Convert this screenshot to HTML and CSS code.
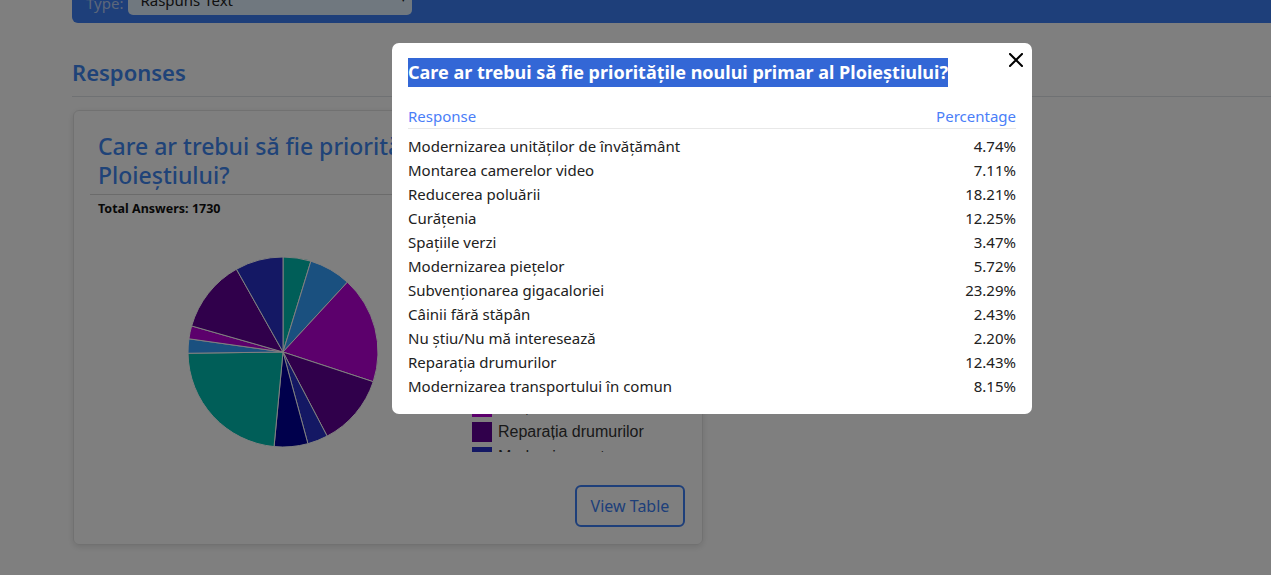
FILE: index.html
```html
<!DOCTYPE html>
<html lang="ro">
<head>
  <meta charset="UTF-8">
  <meta name="viewport" content="width=device-width, initial-scale=1.0">
  <title>Rezultate sondaj</title>
  <link rel="stylesheet" href="styles.css">
</head>
<body>
  <div class="page">
    <div class="filter-bar">
      <label class="filter-label">Type:</label>
      <div class="select">Raspuns Text<span class="caret">&#9662;</span></div>
    </div>

    <h2 class="section-title">Responses</h2>

    <div class="card">
      <h4 class="card-title">Care ar trebui să fie prioritățile noului primar al Ploieștiului?</h4>
      <div class="total">Total Answers: 1730</div>

      <div class="chart">
        <svg class="pie" width="190" height="190" viewBox="0 0 190 190">
          <g stroke="#fff" stroke-width="1" stroke-linejoin="round">
            <path fill="#00bdb0" d="M95 95 L95 0 A95 95 0 0 1 122.87 4.18 Z"/>
            <path fill="#35a0ff" d="M95 95 L122.87 4.18 A95 95 0 0 1 159.38 25.15 Z"/>
            <path fill="#b800d8" d="M95 95 L159.38 25.15 A95 95 0 0 1 185.24 124.7 Z"/>
            <path fill="#600096" d="M95 95 L185.24 124.7 A95 95 0 0 1 139.14 179.12 Z"/>
            <path fill="#2830c8" d="M95 95 L139.14 179.12 A95 95 0 0 1 119.9 186.68 Z"/>
            <path fill="#000098" d="M95 95 L119.9 186.68 A95 95 0 0 1 86.06 189.58 Z"/>
            <path fill="#00bdb0" d="M95 95 L86.06 189.58 A95 95 0 0 1 0.01 96.25 Z"/>
            <path fill="#35a0ff" d="M95 95 L0.01 96.25 A95 95 0 0 1 0.92 81.79 Z"/>
            <path fill="#b800d8" d="M95 95 L0.92 81.79 A95 95 0 0 1 3.64 68.96 Z"/>
            <path fill="#600096" d="M95 95 L3.64 68.96 A95 95 0 0 1 48.45 12.19 Z"/>
            <path fill="#2830c8" d="M95 95 L48.45 12.19 A95 95 0 0 1 95 0 Z"/>
          </g>
        </svg>

        <div class="legend">
          <ul class="legend-list">
            <li><span class="swatch sw-teal"></span>Modernizarea unităților de învățământ</li>
            <li><span class="swatch sw-blue"></span>Montarea camerelor video</li>
            <li><span class="swatch sw-purple"></span>Reducerea poluării</li>
            <li><span class="swatch sw-plum"></span>Curățenia</li>
            <li><span class="swatch sw-navy"></span>Spațiile verzi</li>
            <li><span class="swatch sw-ink"></span>Modernizarea piețelor</li>
            <li><span class="swatch sw-teal"></span>Subvenționarea gigacaloriei</li>
            <li><span class="swatch sw-blue"></span>Câinii fără stăpân</li>
            <li><span class="swatch sw-purple"></span>Nu știu/Nu mă interesează</li>
            <li><span class="swatch sw-plum"></span>Reparația drumurilor</li>
            <li><span class="swatch sw-navy"></span>Modernizarea transportului în comun</li>
          </ul>
        </div>
      </div>

      <div class="card-footer">
        <button class="btn-outline">View Table</button>
      </div>
    </div>
  </div>

  <div class="backdrop">
    <div class="modal">
      <button class="close" aria-label="Close">
        <svg width="14" height="14" viewBox="0 0 14 14"><path d="M1 1 L13 13 M13 1 L1 13" stroke="#000" stroke-width="2" stroke-linecap="square"/></svg>
      </button>
      <h3 class="modal-title"><span class="sel">Care ar trebui să fie prioritățile noului primar al Ploieștiului?</span></h3>
      <table class="resp-table">
        <thead>
          <tr><th>Response</th><th class="num">Percentage</th></tr>
        </thead>
        <tbody>
          <tr><td>Modernizarea unităților de învățământ</td><td class="num">4.74%</td></tr>
          <tr><td>Montarea camerelor video</td><td class="num">7.11%</td></tr>
          <tr><td>Reducerea poluării</td><td class="num">18.21%</td></tr>
          <tr><td>Curățenia</td><td class="num">12.25%</td></tr>
          <tr><td>Spațiile verzi</td><td class="num">3.47%</td></tr>
          <tr><td>Modernizarea piețelor</td><td class="num">5.72%</td></tr>
          <tr><td>Subvenționarea gigacaloriei</td><td class="num">23.29%</td></tr>
          <tr><td>Câinii fără stăpân</td><td class="num">2.43%</td></tr>
          <tr><td>Nu știu/Nu mă interesează</td><td class="num">2.20%</td></tr>
          <tr><td>Reparația drumurilor</td><td class="num">12.43%</td></tr>
          <tr><td>Modernizarea transportului în comun</td><td class="num">8.15%</td></tr>
        </tbody>
      </table>
    </div>
  </div>
</body>
</html>
```

FILE: styles.css
```css
:root { --blue:#3c7ef4; --title:#3f86f0; --text:#212121; }
html, body { margin:0; height:100%; overflow:hidden; }
body { font-family:"Noto Sans", "Open Sans", sans-serif; background:#fff; color:var(--text); }

.page { margin-left:72px; }

/* top filter bar, page is scrolled so only its bottom shows */
.filter-bar { height:23px; background:var(--blue); border-bottom-left-radius:6px; display:flex; align-items:flex-end; padding:0 0 8px 14px; box-sizing:border-box; overflow:hidden; }
.filter-label { color:#b8cdf5; font-size:15px; line-height:20px; margin-right:5px; margin-bottom:2px; }
.select { position:relative; width:284px; height:34px; flex:none; background:#e0f0ff; border-radius:0 0 5px 5px; font-size:15px; line-height:20px; padding:0 12px; box-sizing:border-box; display:flex; align-items:flex-end; padding-bottom:5px; color:#222; }
.caret { position:absolute; right:6px; bottom:6px; font-size:9px; }

.section-title { margin:34px 0 0; padding-bottom:9px; font-size:22px; font-weight:600; line-height:30px; color:var(--title); border-bottom:1px solid #dee2e6; }

.card { width:630px; height:435px; margin:13px 0 0 1px; box-sizing:border-box; border:1px solid #e3e3e3; border-radius:6px; box-shadow:0 2px 6px rgba(0,0,0,.12); padding:16px 17px 17px 16px; display:flex; flex-direction:column; }
.card-title { margin:5px 0 0; padding:0 8px 4px; font-size:23px; font-weight:500; line-height:29px; color:var(--title); border-bottom:1px solid #d6d6d6; }
.total { padding:5px 8px 0; font-size:12.5px; font-weight:700; line-height:18px; color:#111; }

.chart { display:flex; margin-top:12px; height:222px; }
.pie { margin:27px 0 0 98px; flex:none; }
.legend { margin-left:90px; width:180px; height:222px; overflow:hidden; }
.legend-list { list-style:none; margin:-36px 0 0; padding:0; font-family:"Liberation Sans", Arial, sans-serif; font-size:16px; color:#333; }
.legend-list li { display:flex; align-items:center; height:25px; white-space:nowrap; }
.swatch { width:20px; height:20px; margin:0 6px 0 4px; flex:none; }
.sw-teal { background:#00bdb0; } .sw-blue { background:#35a0ff; } .sw-purple { background:#b800d8; }
.sw-plum { background:#600096; } .sw-navy { background:#2830c8; } .sw-ink { background:#000098; }

.card-footer { margin-top:auto; display:flex; justify-content:flex-end; }
.btn-outline { width:110px; height:42px; border:2px solid var(--blue); border-radius:6px; background:transparent; color:var(--blue); font-family:inherit; font-size:16px; cursor:pointer; }

/* modal */
.backdrop { position:fixed; inset:0; background:rgba(0,0,0,.5); }
.modal { position:absolute; top:43px; left:392px; width:640px; box-sizing:border-box; background:#fff; border-radius:7px; padding:15px 16px 16px; }
.close { position:absolute; top:8px; right:7px; width:18px; height:18px; padding:2px; border:0; background:none; cursor:pointer; }
.modal-title { margin:0 0 12px; font-size:18px; font-weight:700; line-height:29px; }
.sel { background:#3367d6; color:#fff; padding:2px 0 3px; }
.resp-table { width:100%; border-collapse:collapse; font-size:15px; }
.resp-table th { text-align:left; font-weight:400; color:#4a7ef8; padding:7px 0 2px; line-height:20px; border-bottom:1px solid #e8e8e8; }
.resp-table td { padding:2px 0; line-height:20px; }
.resp-table tbody tr:first-child td { padding-top:7px; }
.resp-table .num { text-align:right; }
```
